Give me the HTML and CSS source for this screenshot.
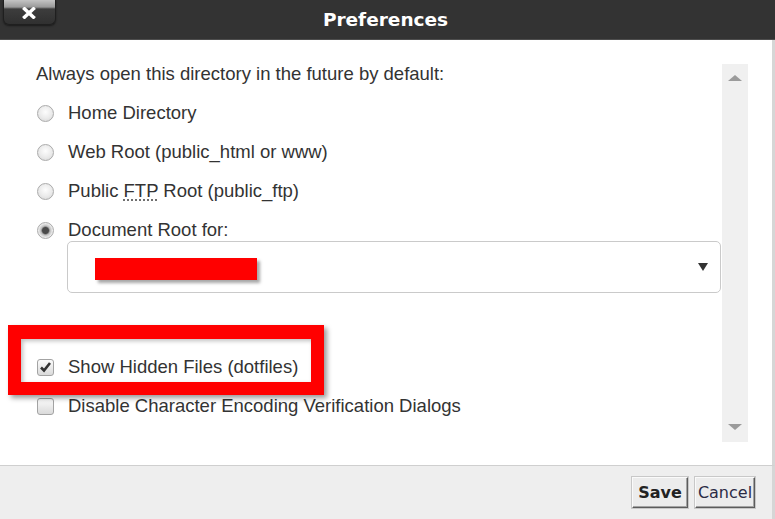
FILE: index.html
```html
<!DOCTYPE html>
<html lang="en">
  <head>
    <meta charset="utf-8">
    <title>Preferences</title>
    <link rel="stylesheet" href="styles.css">
  </head>
  <body>

  <div class="dialog">
    <div class="titlebar">
      <button class="close" type="button" aria-label="Close">
        <svg width="14" height="12" viewBox="0 0 14 12"><path d="M2.5 1.8 L11.5 10.2 M11.5 1.8 L2.5 10.2" stroke="#fff" stroke-width="3.4" stroke-linecap="square"/></svg>
      </button>
      <div class="title">Preferences</div>
      <div></div>
    </div>

    <div class="content">
      <div class="pane">
        <div class="options">
          <p class="intro">Always open this directory in the future by default:</p>
          <div class="row"><span class="radio"></span>Home Directory</div>
          <div class="row"><span class="radio"></span>Web Root (public_html or www)</div>
          <div class="row"><span class="radio"></span><span>Public <abbr title="File Transfer Protocol">FTP</abbr> Root (public_ftp)</span></div>
          <div class="row row-docroot"><span class="radio checked"></span>Document Root for:</div>
          <div class="select">
            <span class="redact"></span>
            <span class="caret"></span>
          </div>
          <div class="row check-first"><span class="check checked"><svg width="13" height="12" viewBox="0 0 13 12"><path d="M2 6.5 L5 9.5 L11 2" fill="none" stroke="#333" stroke-width="2.6"/></svg></span>Show Hidden Files (dotfiles)</div>
          <div class="row"><span class="check"></span>Disable Character Encoding Verification Dialogs</div>
        </div>
        <div class="scrollbar">
          <span class="arrow up"></span>
          <span class="arrow down"></span>
        </div>
      </div>
    </div>

    <div class="footer">
      <button class="btn btn-save" type="button">Save</button>
      <button class="btn btn-cancel" type="button">Cancel</button>
    </div>

    <div class="highlight"></div>
  </div>

  </body>
</html>
```

FILE: styles.css
```css
html, body {
  margin: 0;
  padding: 0;
}
body {
  background: #fff;
  color: #333;
  font-family: "Liberation Sans", Arial, sans-serif;
  font-size: 18.5px;
}

.dialog {
  position: relative;
  width: 775px;
  height: 519px;
  display: flex;
  flex-direction: column;
  overflow: hidden;
}

/* title bar */
.titlebar {
  height: 39px;
  flex: none;
  background: #333;
  border-bottom: 1px solid #4d4d4d;
  display: grid;
  grid-template-columns: 1fr auto 1fr;
  align-items: center;
  padding-right: 4px;
}
.close {
  justify-self: start;
  align-self: start;
  margin: 0 0 0 3px;
  padding: 0;
  width: 53px;
  height: 25px;
  border: 1px solid #1f1f1f;
  border-top: 0;
  border-radius: 0 0 6px 6px;
  background: linear-gradient(#c4c4c4 0, #9a9a9a 7px, #3d3d3d 9px, #303030 100%);
  box-shadow: 0 1px 2px rgba(0,0,0,0.5);
  display: flex;
  align-items: center;
  justify-content: center;
  cursor: pointer;
}
.close svg {
  margin-top: 1px;
  margin-left: -1px;
}
.title {
  font: bold 18.5px "DejaVu Sans", Verdana, sans-serif;
  color: #fff;
  margin-top: -1px;
}

/* body */
.content {
  flex: 1;
  min-height: 0;
  display: flex;
  padding: 24px 24px 23px 36px;
  border-right: 3px solid #d6d6d6;
}
.pane {
  flex: 1;
  display: flex;
}
.options {
  flex: 1;
}
.intro {
  margin: -1px 0 17px;
  line-height: 22px;
}
.row {
  display: flex;
  align-items: center;
  gap: 14px;
  height: 22px;
  line-height: 22px;
  margin-bottom: 17px;
  white-space: nowrap;
}
.row-docroot {
  margin-bottom: 0;
}
abbr {
  text-decoration: underline dotted #666;
  text-underline-offset: 3px;
}

.radio {
  flex: none;
  box-sizing: border-box;
  width: 17px;
  height: 17px;
  margin-left: 1px;
  border: 1px solid #ababab;
  border-radius: 50%;
  background: radial-gradient(circle at 50% 40%, #fdfdfd 0, #eaeaea 55%, #d4d4d4 100%);
}
.radio.checked {
  background: radial-gradient(circle, #4a4a4a 0, #4a4a4a 3px, #bdbdbd 4.5px, #ececec 7px, #d8d8d8 100%);
}
.check {
  flex: none;
  box-sizing: border-box;
  width: 17px;
  height: 17px;
  margin-left: 1px;
  border: 1px solid #a3a3a3;
  border-radius: 3px;
  background: linear-gradient(#fbfbfb, #dadada);
  display: flex;
  align-items: center;
  justify-content: center;
}

.select {
  box-sizing: border-box;
  height: 52px;
  margin: 0 1px 0 31px;
  padding: 4px 12px 0 27px;
  border: 1px solid #cacaca;
  border-radius: 5px;
  display: flex;
  align-items: center;
}
.redact {
  width: 162px;
  height: 22px;
  background: #f00;
  box-shadow: 3px 3px 3px rgba(0,0,0,0.35);
}
.caret {
  margin: -4px 0 0 auto;
  width: 0;
  height: 0;
  border-left: 5px solid transparent;
  border-right: 5px solid transparent;
  border-top: 8px solid #333;
}
.check-first {
  margin-top: 63px;
}

/* fake scroll track */
.scrollbar {
  flex: none;
  width: 26px;
  background: #f0f0f0;
  display: flex;
  flex-direction: column;
  align-items: center;
  justify-content: space-between;
  padding: 11px 0 12px;
  box-sizing: border-box;
}
.arrow {
  width: 0;
  height: 0;
  border-left: 7px solid transparent;
  border-right: 7px solid transparent;
}
.arrow.up {
  border-bottom: 6px solid #9b9b9b;
}
.arrow.down {
  border-top: 6px solid #9b9b9b;
}

/* footer */
.footer {
  flex: none;
  box-sizing: border-box;
  height: 54px;
  background: #eee;
  border-top: 1px solid #cfcfcf;
  border-right: 3px solid #d6d6d6;
  display: flex;
  justify-content: flex-end;
  align-items: flex-start;
  gap: 7px;
  padding: 11px 17px 0 0;
}
.btn {
  box-sizing: border-box;
  height: 31px;
  padding: 0;
  font: 16px "DejaVu Sans", Verdana, sans-serif;
  color: #222;
  background: #ececec;
  border: 1px solid;
  border-color: #fafafa #5c5c5c #5c5c5c #fafafa;
  box-shadow: inset -1px -1px #a3a3a3, 0 0 0 1px #c8c8c8;
  cursor: pointer;
}
.btn-save {
  width: 56px;
  font-weight: bold;
}
.btn-cancel {
  width: 60px;
  color: #2b2b45;
}

/* annotation box drawn over the screenshot */
.highlight {
  position: absolute;
  left: 8px;
  top: 325px;
  width: 316px;
  height: 70px;
  box-sizing: border-box;
  border: 13px solid #f00;
  border-top-width: 14px;
  box-shadow: 3px 3px 5px rgba(0,0,0,0.4), inset 2px 2px 4px rgba(0,0,0,0.25);
}
```
